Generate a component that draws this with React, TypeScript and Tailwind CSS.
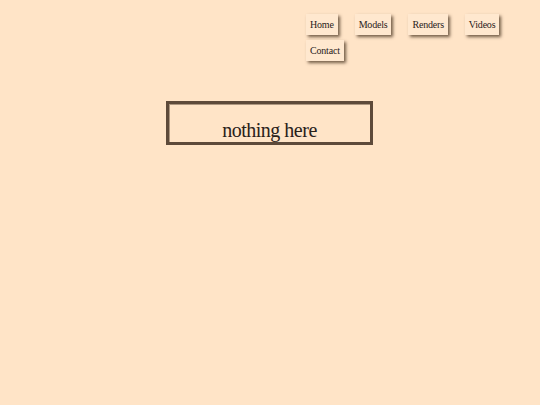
import React from "react";

const links = ["Home", "Models", "Renders", "Videos", "Contact"];

const App = () => {
  return (
    <div
      className="w-full min-h-[405px] bg-[#ffe4c7] text-[#2a211a]"
      style={{ fontFamily: '"Liberation Serif", "DejaVu Serif", serif' }}
    >
      <nav className="flex justify-end pt-[14px] pr-[18px]">
        <div className="flex w-[216px] flex-wrap gap-x-[17px] gap-y-[5px]">
          {links.map((l) => (
            <a
              key={l}
              href="#"
              className="flex h-[21px] items-center bg-[#ffe8cf] px-[4px] text-[10px] tracking-[-0.2px] shadow-[2px_2px_3px_rgba(70,50,30,0.75)]"
            >
              {l}
            </a>
          ))}
        </div>
      </nav>
      <div className="mt-[40px] flex pl-[166px]">
        <div className="flex h-[44px] w-[207px] items-end justify-center border-[3px] border-[#5e4a3a] pb-[2px] shadow-[inset_1px_1px_0_rgba(120,100,80,0.6)]">
          <span className="text-[20px] tracking-[-0.5px] leading-none">nothing here</span>
        </div>
      </div>
    </div>
  );
};

export default App;
